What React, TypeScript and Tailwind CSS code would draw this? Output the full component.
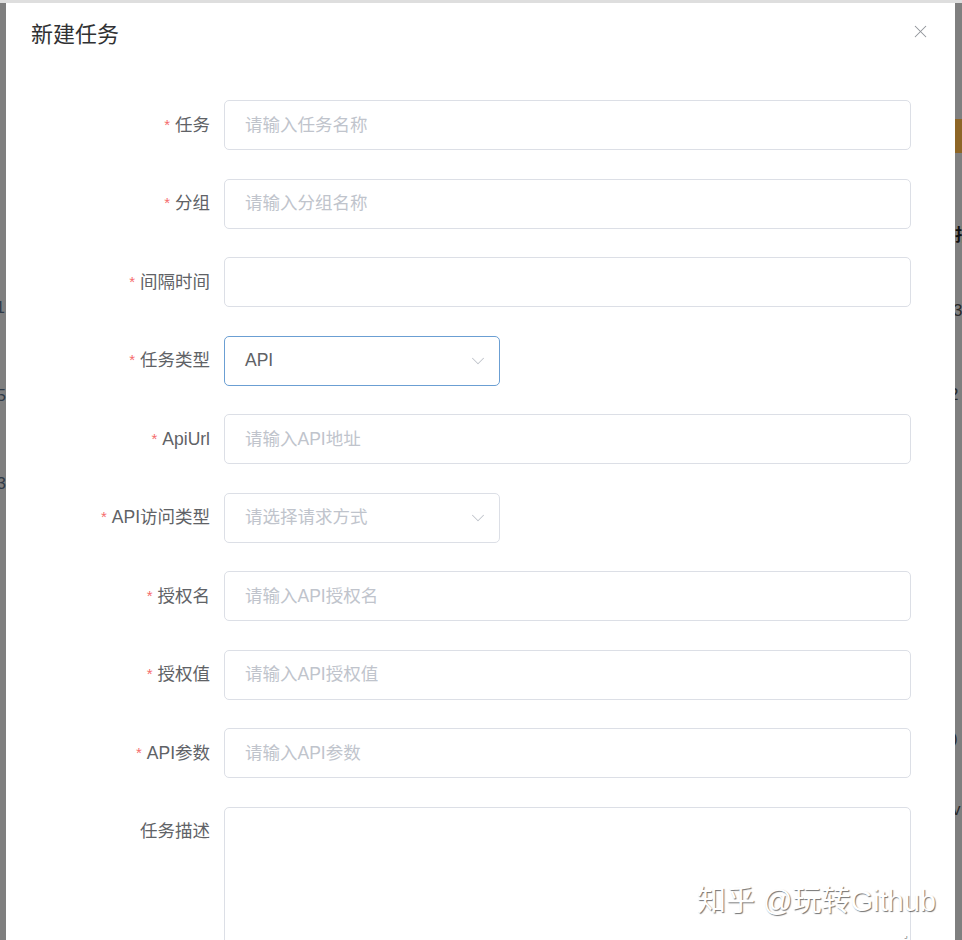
import { ChevronDown, X } from 'lucide-react';

const FONT = '"Liberation Sans", "Noto Sans CJK SC", sans-serif';

type Field = {
  label: string;
  required?: boolean;
  placeholder?: string;
  value?: string;
  kind?: 'input' | 'select' | 'textarea';
  focused?: boolean;
};

const FIELDS: Field[] = [
  { label: '任务', required: true, placeholder: '请输入任务名称' },
  { label: '分组', required: true, placeholder: '请输入分组名称' },
  { label: '间隔时间', required: true },
  { label: '任务类型', required: true, value: 'API', kind: 'select', focused: true },
  { label: 'ApiUrl', required: true, placeholder: '请输入API地址' },
  { label: 'API访问类型', required: true, placeholder: '请选择请求方式', kind: 'select' },
  { label: '授权名', required: true, placeholder: '请输入API授权名' },
  { label: '授权值', required: true, placeholder: '请输入API授权值' },
  { label: 'API参数', required: true, placeholder: '请输入API参数' },
  { label: '任务描述', kind: 'textarea' },
];

function FieldRow({ f }: { f: Field }) {
  return (
    <div className="flex items-start">
      {/* 라벨 */}
      <div className="flex h-[50px] w-[193px] shrink-0 items-center justify-end pr-[14px] text-[17.5px] text-[#606266]">
        {f.required && <span className="mr-[5px] text-[15px] text-[#f56c6c]">*</span>}
        {f.label}
      </div>

      {f.kind === 'textarea' ? (
        <div className="flex h-[160px] w-[687px] items-end justify-end rounded-[5px] border border-[#dcdfe6] bg-white pb-[26px] pr-[2px]">
          <span className="text-[8px] leading-none text-[#606266]">⌟</span>
        </div>
      ) : f.kind === 'select' ? (
        <div
          className={`flex h-[50px] w-[276px] items-center justify-between rounded-[5px] border bg-white pl-[20px] pr-[10px] ${
            f.focused ? 'border-[#6b9fd3]' : 'border-[#dcdfe6]'
          }`}
        >
          <span className={`text-[17.5px] ${f.value ? 'text-[#606266]' : 'text-[#c0c4cc]'}`}>
            {f.value ?? f.placeholder}
          </span>
          <ChevronDown size={22} strokeWidth={1.1} className="text-[#c0c4cc]" />
        </div>
      ) : (
        <div className="flex h-[50px] w-[687px] items-center rounded-[5px] border border-[#dcdfe6] bg-white pl-[20px]">
          <span className="text-[17.5px] text-[#c0c4cc]">{f.placeholder}</span>
        </div>
      )}
    </div>
  );
}

export default function App() {
  return (
    <div className="h-[940px] w-[962px] overflow-hidden bg-[#7f7f7f]" style={{ fontFamily: FONT }}>
      <div className="h-[3px] bg-[#dedede]" />
      <div className="flex h-[937px]">
        {/* 왼쪽 배경 (가려진 표) */}
        <div className="flex w-[6px] shrink-0 flex-col items-end gap-[64px] overflow-hidden pt-[293px] text-[17px] leading-[24px] text-[#2f3a48]">
          <span className="mr-[1px]">1</span>
          <span>5</span>
          <span>3</span>
        </div>

        {/* 다이얼로그 */}
        <div className="relative w-[949px] shrink-0 bg-white">
          <div className="flex items-start justify-between pl-[25px] pr-[24px] pt-[17px]">
            <span className="text-[22px] leading-[30px] text-[#303133]">新建任务</span>
            <X size={21} strokeWidth={1.2} className="mt-[1px] text-[#909399]" />
          </div>

          <div className="mt-[50px] flex flex-col gap-[28.5px] pl-[25px]">
            {FIELDS.map((f) => (
              <FieldRow key={f.label} f={f} />
            ))}
          </div>

          {/* 워터마크 */}
          <div className="absolute left-[691px] top-[880px] text-[29px] leading-[36px] text-white [text-shadow:1px_1px_1px_rgba(0,0,0,0.55)]">
            知乎 @玩转Github
          </div>
        </div>

        {/* 오른쪽 배경 */}
        <div className="flex flex-1 flex-col overflow-hidden text-[17px] leading-[24px] text-[#2a2a2a]">
          <div className="mt-[116px] h-[34px] w-full shrink-0 bg-[#8d6526]" />
          <span className="mt-[71px] font-bold text-[#111]">指</span>
          <span className="mt-[51px] ml-[-2px]">3</span>
          <span className="mt-[60px] ml-[-6px]">2</span>
          <span className="mt-[320px] ml-[-3px]">)</span>
          <span className="mt-[47px] ml-[-3px]">v</span>
        </div>
      </div>
    </div>
  );
}
